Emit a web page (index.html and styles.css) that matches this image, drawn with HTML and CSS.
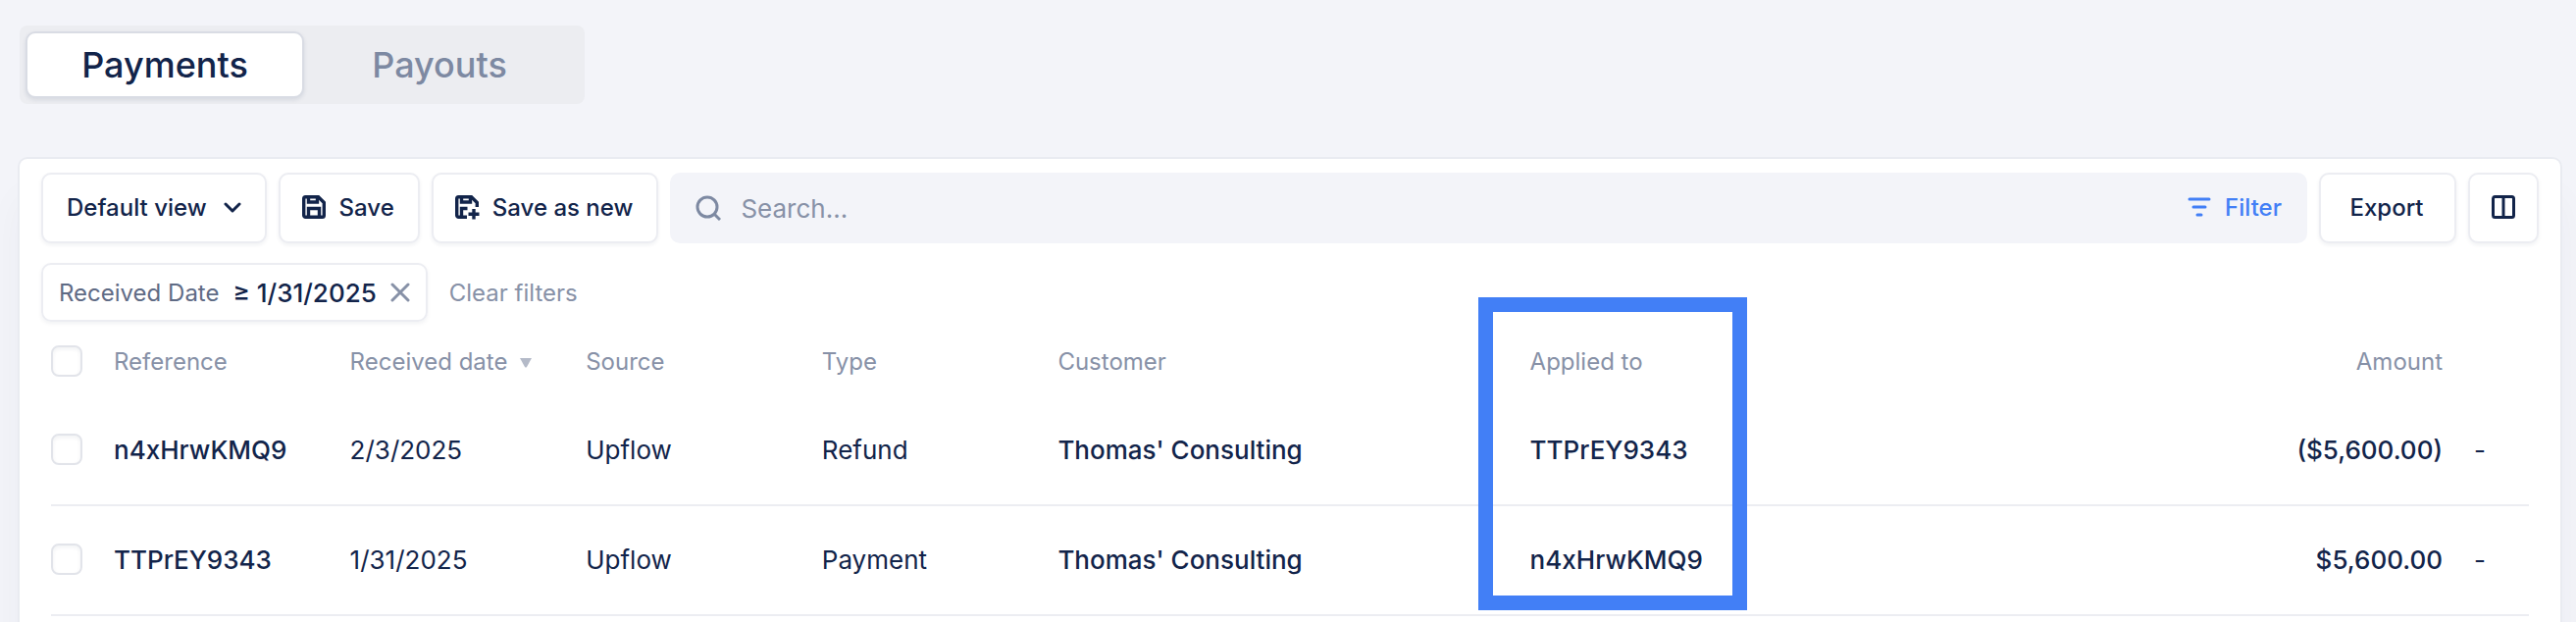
FILE: index.html
```
<!DOCTYPE html>
<html lang="en">
<head>
  <meta charset="UTF-8">
  <meta name="viewport" content="width=device-width, initial-scale=1.0">
  <title>Payments</title>
  <link rel="stylesheet" href="styles.css">
</head>
<body>
  <nav class="tabs">
    <button type="button" class="tab active">Payments</button>
    <button type="button" class="tab">Payouts</button>
  </nav>

  <main class="card">
    <div class="toolbar">
      <button type="button" class="button view-button">
        Default view
        <svg class="chevron" viewBox="0 0 18 12"><path d="M2 3l7 7 7-7"/></svg>
      </button>
      <button type="button" class="button">
        <svg class="icon" viewBox="0 0 24 24">
          <path d="M3.5 1.7h13l5.8 5.8v13a1.8 1.8 0 0 1-1.8 1.8h-17a1.8 1.8 0 0 1-1.8-1.8v-17a1.8 1.8 0 0 1 1.8-1.8z"/>
          <path d="M6.5 2v5h9V2M6.500 22v-8.500h11V22"/>
        </svg>
        Save
      </button>
      <button type="button" class="button">
        <svg class="icon" viewBox="0 0 24 24">
          <path d="M12 22.3H3.5a1.8 1.8 0 0 1-1.8-1.8v-17a1.8 1.8 0 0 1 1.8-1.8h13l5.8 5.8v4.500"/>
          <path d="M6.500 2v5h9V2M6.500 22v-8.500h6M19 14v10.500M13.500 19.300h11"/>
        </svg>
        Save as new
      </button>
      <div class="search">
        <svg class="search-icon" viewBox="0 0 26 26"><circle cx="12" cy="12" r="10"/><path d="M19 19l6 6"/></svg>
        <input type="text" placeholder="Search..." aria-label="Search">
        <button type="button" class="filter-button">
          <svg class="filter-icon" viewBox="0 0 24 20"><path d="M2 2h20M6 10h12M10 18h4"/></svg>
          Filter
        </button>
      </div>
      <button type="button" class="button export-button">Export</button>
      <button type="button" class="button columns-button" aria-label="Columns">
        <svg class="icon" viewBox="0 0 24 24"><rect x="1.500" y="1.500" width="21" height="21" rx="2"/><path d="M12 1v22"/></svg>
      </button>
    </div>

    <div class="filters">
      <div class="chip">
        <span>Received Date</span>
        <strong>≥ 1/31/2025</strong>
        <button type="button" class="remove" aria-label="Remove filter">
          <svg viewBox="0 0 20 20"><path d="M2 2l16 16M18 2L2 18"/></svg>
        </button>
      </div>
      <button type="button" class="clear">Clear filters</button>
    </div>

    <table class="payments">
      <thead>
        <tr>
          <th><input type="checkbox" aria-label="Select all"></th>
          <th>Reference</th>
          <th>Received date <svg class="sort" viewBox="0 0 12 10"><path d="M0 0h12l-5 9q-1 1-2 0z"/></svg></th>
          <th>Source</th>
          <th>Type</th>
          <th>Customer</th>
          <th class="applied">Applied to<div class="highlight"></div></th>
          <th class="amount">Amount</th>
          <th></th>
        </tr>
      </thead>
      <tbody>
        <tr>
          <td><input type="checkbox" aria-label="Select n4xHrwKMQ9"></td>
          <td class="strong">n4xHrwKMQ9</td>
          <td>2/3/2025</td>
          <td>Upflow</td>
          <td>Refund</td>
          <td class="strong">Thomas' Consulting</td>
          <td class="strong">TTPrEY9343</td>
          <td class="strong amount">($5,600.00)</td>
          <td>-</td>
        </tr>
        <tr>
          <td><input type="checkbox" aria-label="Select TTPrEY9343"></td>
          <td class="strong">TTPrEY9343</td>
          <td>1/31/2025</td>
          <td>Upflow</td>
          <td>Payment</td>
          <td class="strong">Thomas' Consulting</td>
          <td class="strong">n4xHrwKMQ9</td>
          <td class="strong amount">$5,600.00</td>
          <td>-</td>
        </tr>
      </tbody>
    </table>
  </main>
</body>
</html>
```
FILE: styles.css
```
* {
  box-sizing: border-box;
}
body {
  display: flex;
  flex-direction: column;
  min-height: 100vh;
  margin: 0;
  padding: 26px 16px 0 20px;
  background-color: #f3f4f9;
  color: #12244a;
  font-family: Inter, "Liberation Sans", sans-serif;
  font-size: 24px;
}
button,
input {
  margin: 0;
  padding: 0;
  border: none;
  background: none;
  color: inherit;
  font: inherit;
}
button {
  cursor: pointer;
}
svg {
  flex: none;
  fill: none;
  stroke: currentColor;
  stroke-width: 3;
}

/* Tabs */
.tabs {
  display: flex;
  align-self: flex-start;
  padding: 6px 10px 6px 6px;
  margin-bottom: 56px;
  border-radius: 8px;
  background-color: #ecedf1;
}
.tab {
  width: 276px;
  height: 68px;
  border-radius: 10px;
  color: #7d89a2;
  font-size: 36px;
  font-weight: 500;
}
.tab.active {
  width: 284px;
  border: 2px solid #d9dce4;
  background-color: white;
  color: #12244a;
  box-shadow: 0 2px 4px rgba(18, 36, 74, 0.1);
}

/* Card */
.card {
  flex: 1;
  padding: 14px 22px 0;
  border-radius: 8px 8px 0 0;
  background-color: white;
  box-shadow: 0 0 0 2px #e9ebf1, 0 40px 40px rgba(18, 36, 74, 0.04);
}
.toolbar {
  display: flex;
  gap: 12px;
}
.button {
  display: flex;
  align-items: center;
  justify-content: center;
  gap: 14px;
  height: 72px;
  padding: 0 24px 2px 22px;
  border: 2px solid #ecedf2;
  border-radius: 10px;
  background-color: white;
  font-weight: 500;
  white-space: nowrap;
  box-shadow: 0 2px 4px rgba(18, 36, 74, 0.06);
}
.view-button {
  gap: 17px;
  padding: 0 24px 2px;
}
.export-button {
  width: 140px;
}
.columns-button {
  width: 72px;
  padding: 0 0 2px;
}
.icon {
  width: 24px;
  height: 24px;
  overflow: visible;
}
.button .icon {
  stroke-width: 3.4;
}
.columns-button .icon {
  stroke-width: 3;
}
.chevron {
  width: 18px;
  height: 12px;
  stroke-linecap: round;
  stroke-linejoin: round;
}
.search {
  display: flex;
  flex: 1;
  align-items: center;
  height: 72px;
  padding: 0 26px;
  border-radius: 10px;
  background-color: #f3f4f9;
}
.search-icon {
  width: 26px;
  height: 26px;
  color: #7d89a2;
}
.search input {
  flex: 1;
  margin-left: 20px;
  font-size: 26px;
  outline: none;
}
.search input::placeholder {
  color: #8791a7;
  opacity: 1;
}
.filter-button {
  display: flex;
  align-items: center;
  gap: 14px;
  padding-bottom: 2px;
  color: #427ff6;
  font-weight: 500;
}
.filter-icon {
  width: 24px;
  height: 20px;
  stroke-linecap: round;
}

/* Filters */
.filters {
  display: flex;
  align-items: center;
  gap: 22px;
  margin-top: 20px;
}
.chip {
  display: flex;
  align-items: center;
  height: 60px;
  padding: 0 16px;
  border: 2px solid #ecedf2;
  border-radius: 10px;
  color: #5f6b85;
  box-shadow: 0 2px 4px rgba(18, 36, 74, 0.06);
}
.chip strong {
  margin: 0 14px;
  color: #12244a;
  font-size: 26px;
  font-weight: 500;
}
.remove {
  display: flex;
  color: #8791a7;
}
.remove svg {
  width: 20px;
  height: 20px;
  stroke-linecap: round;
}
.clear {
  color: #8791a7;
}

/* Table */
.payments {
  display: block;
  margin: 4px 10px 0;
}
.payments thead,
.payments tbody {
  display: block;
}
.payments tr {
  display: grid;
  grid-template-columns: 64px repeat(4, 1fr) 2fr 2fr 2fr 56px;
  align-items: center;
  height: 112px;
  padding-bottom: 2px;
  border-bottom: 2px solid #ecedf2;
  font-size: 26px;
}
.payments thead tr {
  height: 72px;
  padding: 0;
  border: none;
  color: #8791a7;
  font-size: 24px;
}
.payments th,
.payments td {
  padding: 0;
  font-weight: 400;
  text-align: left;
}
.payments .strong {
  font-weight: 500;
}
.payments .amount {
  padding-right: 32px;
  text-align: right;
}
.payments input {
  display: block;
  width: 32px;
  height: 32px;
  border: 2px solid #e2e4ea;
  border-radius: 8px;
  background-color: white;
  box-shadow: inset 0 2px 4px rgba(18, 36, 74, 0.06);
  appearance: none;
}
.sort {
  width: 12px;
  height: 10px;
  margin-left: 6px;
  vertical-align: 2px;
  fill: #b4bac8;
  stroke: none;
}
.applied {
  position: relative;
}
/* Frame over the whole "Applied to" column */
.highlight {
  position: absolute;
  top: -51px;
  left: -53px;
  width: 274px;
  height: 319px;
  border: 15px solid #427ff6;
  pointer-events: none;
}
```
